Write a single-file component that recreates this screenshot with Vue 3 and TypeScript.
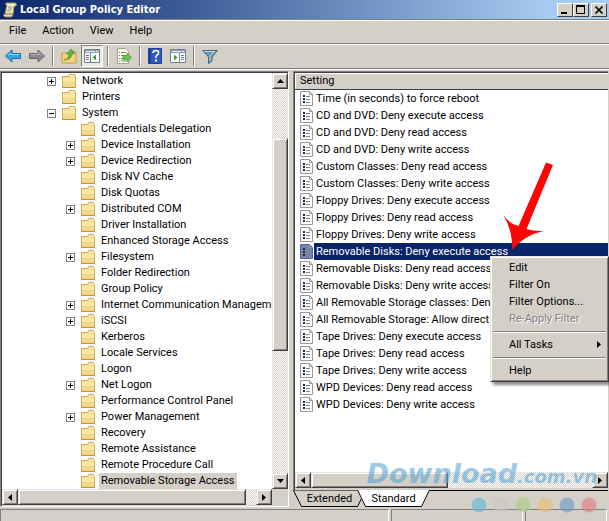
<script setup lang="ts">
import { ref } from 'vue'

interface TreeNode {
  name: string
  level: 1 | 2
  state?: 'open' | 'closed'
}

const nodes: TreeNode[] = [
  { name: 'Network', level: 1, state: 'closed' },
  { name: 'Printers', level: 1 },
  { name: 'System', level: 1, state: 'open' },
  { name: 'Credentials Delegation', level: 2 },
  { name: 'Device Installation', level: 2, state: 'closed' },
  { name: 'Device Redirection', level: 2, state: 'closed' },
  { name: 'Disk NV Cache', level: 2 },
  { name: 'Disk Quotas', level: 2 },
  { name: 'Distributed COM', level: 2, state: 'closed' },
  { name: 'Driver Installation', level: 2 },
  { name: 'Enhanced Storage Access', level: 2 },
  { name: 'Filesystem', level: 2, state: 'closed' },
  { name: 'Folder Redirection', level: 2 },
  { name: 'Group Policy', level: 2 },
  { name: 'Internet Communication Manageme', level: 2, state: 'closed' },
  { name: 'iSCSI', level: 2, state: 'closed' },
  { name: 'Kerberos', level: 2 },
  { name: 'Locale Services', level: 2 },
  { name: 'Logon', level: 2 },
  { name: 'Net Logon', level: 2, state: 'closed' },
  { name: 'Performance Control Panel', level: 2 },
  { name: 'Power Management', level: 2, state: 'closed' },
  { name: 'Recovery', level: 2 },
  { name: 'Remote Assistance', level: 2 },
  { name: 'Remote Procedure Call', level: 2 },
  { name: 'Removable Storage Access', level: 2 },
]

const settings: string[] = [
  'Time (in seconds) to force reboot',
  'CD and DVD: Deny execute access',
  'CD and DVD: Deny read access',
  'CD and DVD: Deny write access',
  'Custom Classes: Deny read access',
  'Custom Classes: Deny write access',
  'Floppy Drives: Deny execute access',
  'Floppy Drives: Deny read access',
  'Floppy Drives: Deny write access',
  'Removable Disks: Deny execute access',
  'Removable Disks: Deny read access',
  'Removable Disks: Deny write access',
  'All Removable Storage classes: Deny',
  'All Removable Storage: Allow direct',
  'Tape Drives: Deny execute access',
  'Tape Drives: Deny read access',
  'Tape Drives: Deny write access',
  'WPD Devices: Deny read access',
  'WPD Devices: Deny write access',
]

const menus = ['File', 'Action', 'View', 'Help']
const dots = ['#5fb7d8', '#c9c7c6', '#a9cc85', '#e8bd72', '#6699c4', '#e27a7a']

const currentNode = ref('Removable Storage Access')
const currentSetting = ref('Removable Disks: Deny execute access')
</script>

<template>
  <div class="window">
    <header class="titlebar">
      <svg class="app-icon" width="14" height="16" viewBox="0 0 14 16" aria-hidden="true">
        <path d="M3 1h9q2 0 1 3h-2l-1 8H2l2-9q-2 0-1-2z" fill="#f3edcf" stroke="#a59865" />
        <path d="M1 12h9q0 3-2 3H2q-2-1-1-3z" fill="#e3d8a8" stroke="#8f824f" />
        <path d="M5 5h4M5 7h4M4 9h4" stroke="#928a68" />
      </svg>
      <h1>Local Group Policy Editor</h1>
      <div class="caption-buttons">
        <button class="cap" aria-label="Minimize"><svg width="12" height="10" viewBox="0 0 12 10"><path d="M2 7h6v2H2z" /></svg></button>
        <button class="cap" aria-label="Maximize"><svg width="12" height="10" viewBox="0 0 12 10"><path d="M1 0h9v9H1zM2 2v6h7V2z" fill-rule="evenodd" /></svg></button>
        <button class="cap close" aria-label="Close"><svg width="12" height="10" viewBox="0 0 12 10"><path d="M2.500 1.500l7 7M9.500 1.500l-7 7" stroke="#000" stroke-width="1.700" /></svg></button>
      </div>
    </header>

    <nav class="menubar">
      <button v-for="m in menus" :key="m">{{ m }}</button>
    </nav>

    <div class="toolbar">
      <button class="tool" aria-label="Back">
        <svg width="16" height="14" viewBox="0 0 16 14"><path d="M.5 7L7 1v3.500h8.500v5H7V13z" fill="#35a4e5" stroke="#1a6da8" /><path d="M3 6.500L6 4v1.500h8.500" fill="none" stroke="#8fd4fa" /></svg>
      </button>
      <button class="tool forward" aria-label="Forward">
        <svg width="16" height="14" viewBox="0 0 16 14"><path d="M15.500 7L9 1v3.500H.5v5H9V13z" fill="#8b8b8b" stroke="#626262" /><path d="M1.500 5.500H10V3.500L13 6.500" fill="none" stroke="#b5b5b5" /></svg>
      </button>
      <span class="sep"></span>
      <button class="tool" aria-label="Up one level">
        <svg width="16" height="16" viewBox="0 0 16 16"><path d="M1 5h5l1 1h6V4h2v11H1z" fill="#f3d27a" stroke="#c19c46" /><path d="M3 12q5-1 5-6H5.500L10 1l4 4h-2.500q-1 7-8.500 7z" fill="#62b73e" stroke="#3d8a25" stroke-width=".6" /></svg>
      </button>
      <button class="tool pressed" aria-label="Show or hide console tree" aria-pressed="true">
        <svg width="16" height="14" viewBox="0 0 16 14"><path d="M.5.5h15v13H.5z" fill="#fff" stroke="#77818c" /><path d="M1 1h14v3H1z" fill="#8fa0b3" /><path d="M2 2.500h9M12 2.500h2" stroke="#e7edf3" /><path d="M6.500 4v9" stroke="#77818c" /><path d="M2 6.500h3M2 8.500h3M2 10.500h3" stroke="#5b7ba3" /><path d="M12 5.500v6L8.500 8.500z" fill="#36a32c" /></svg>
      </button>
      <span class="sep"></span>
      <button class="tool" aria-label="Export list">
        <svg width="16" height="16" viewBox="0 0 16 16"><path d="M1.500.5h8l3 3v12h-11z" fill="#fffef0" stroke="#a8a28c" /><path d="M3 4.500h1M5 4.500h5M3 7.500h1M5 7.500h4M3 10.500h1M5 10.500h3M3 13h1M5 13h5" stroke="#777" /><path d="M7 7.500h4V5l4.500 4.500L11 14v-2.500H7z" fill="#68c648" stroke="#3e962b" stroke-width=".7" /></svg>
      </button>
      <span class="sep"></span>
      <button class="tool" aria-label="Help">
        <svg width="14" height="16" viewBox="0 0 14 16"><path d="M.5.5h13v15H.5z" fill="#315bc4" stroke="#223e91" /><path d="M1 1h2v14H1z" fill="#1f3f9d" /><path d="M5 5q0-2.500 3-2.500T10.500 5Q10.500 6.500 8.500 7.500 8 8 8 10" fill="none" stroke="#fff" stroke-width="1.600" /><path d="M7 11.500h2v2H7z" fill="#fff" /></svg>
      </button>
      <button class="tool panel" aria-label="Show or hide action pane">
        <svg width="16" height="14" viewBox="0 0 16 14"><path d="M.5.5h15v13H.5z" fill="#fff" stroke="#77818c" /><path d="M1 1h14v3H1z" fill="#8fa0b3" /><path d="M2 2.500h9M12 2.500h2" stroke="#e7edf3" /><path d="M9.500 4v9" stroke="#77818c" /><path d="M11 6.500h3M11 8.500h3M11 10.500h3" stroke="#5b7ba3" /><path d="M4 5.500v6L7.500 8.500z" fill="#36a32c" /></svg>
      </button>
      <span class="sep"></span>
      <button class="tool" aria-label="Filter">
        <svg width="16" height="15" viewBox="0 0 16 15"><path d="M.5 1.500h15L10 8v4l-3.500 2.500V8z" fill="#6e93ad" stroke="#476b85" /><path d="M2.500 2.500h10L8 7v5" fill="none" stroke="#c8dfec" /></svg>
      </button>
    </div>

    <main class="body">
      <section class="tree-pane" aria-label="Console tree">
        <div class="tree-main">
          <ul class="tree">
            <li v-for="n in nodes" :key="n.name" :class="{ deep: n.level === 2 }">
              <span class="expander-slot">
                <button v-if="n.state" class="expander" :aria-label="n.state === 'open' ? 'Collapse' : 'Expand'">
                  <svg width="7" height="7" viewBox="0 0 7 7"><path :d="n.state === 'open' ? 'M1 3h5v1H1z' : 'M1 3h2V1h1v2h2v1H4v2H3V4H1z'" /></svg>
                </button>
              </span>
              <svg class="folder" width="14" height="14" viewBox="0 0 14 14" aria-hidden="true">
                <path d="M.5 2.500h6l1-2h5l1 2v11H.5z" fill="#f4d98b" stroke="#d3ae58" />
                <path d="M8 1.500h4v1H8z" fill="#fff8df" />
                <path d="M1 4h12v4H1z" fill="#fae6a5" />
                <path d="M.5 13.500h13" stroke="#b8923c" />
              </svg>
              <button class="node" :class="{ current: n.name === currentNode }" @click="currentNode = n.name">{{ n.name }}</button>
            </li>
          </ul>
          <div class="bar vertical">
            <button class="raised arrow" aria-label="Scroll up"><svg width="7" height="4" viewBox="0 0 7 4"><path d="M0 4L3.500 0 7 4z" /></svg></button>
            <span class="before"></span>
            <span class="raised thumb"></span>
            <span class="after"></span>
            <button class="raised arrow" aria-label="Scroll down"><svg width="7" height="4" viewBox="0 0 7 4"><path d="M0 0h7L3.500 4z" /></svg></button>
          </div>
        </div>
        <div class="bar-row">
          <div class="bar horizontal">
            <button class="raised arrow" aria-label="Scroll left"><svg width="4" height="7" viewBox="0 0 4 7"><path d="M4 0v7L0 3.500z" /></svg></button>
            <span class="raised thumb"></span>
            <span class="after"></span>
            <button class="raised arrow" aria-label="Scroll right"><svg width="4" height="7" viewBox="0 0 4 7"><path d="M0 0v7l4-3.500z" /></svg></button>
          </div>
          <span class="corner"></span>
        </div>
      </section>

      <section class="list-pane" aria-label="Settings">
        <div class="list-box">
          <div class="list-scroll">
            <table>
              <thead>
                <tr><th scope="col">Setting</th></tr>
              </thead>
              <tbody>
                <tr v-for="s in settings" :key="s" :class="{ chosen: s === currentSetting }" @click="currentSetting = s">
                  <td>
                    <div class="cell">
                      <svg class="page" width="13" height="15" viewBox="0 0 13 15" aria-hidden="true">
                        <path class="sheet" d="M.5.5h9l3 3v11H.5z" />
                        <path d="M9.500.5v3h3" fill="none" stroke="#999" />
                        <path d="M3 4h2v2H3zM3 7h2v2H3zM3 10h2v2H3z" fill="#26263a" />
                        <path d="M6 5.500h4M6 8.500h4M6 11.500h4" stroke="#858592" />
                      </svg>
                      <span class="label">{{ s }}</span>
                    </div>
                  </td>
                </tr>
              </tbody>
            </table>
          </div>
          <div class="bar horizontal">
            <button class="raised arrow" aria-label="Scroll left"><svg width="4" height="7" viewBox="0 0 4 7"><path d="M4 0v7L0 3.500z" /></svg></button>
            <span class="raised thumb half"></span>
            <span class="after"></span>
            <button class="raised arrow" aria-label="Scroll right"><svg width="4" height="7" viewBox="0 0 4 7"><path d="M0 0v7l4-3.500z" /></svg></button>
          </div>
        </div>
        <div class="tabs">
          <button class="tab">
            <svg width="73" height="17" viewBox="0 0 73 17" aria-hidden="true"><path d="M.5.5l8 16h56l8-16" fill="#d4d0c8" stroke="#000" /></svg>
            <span>Extended</span>
          </button>
          <button class="tab active">
            <svg width="73" height="17" viewBox="0 0 73 17" aria-hidden="true"><path d="M0 0h73l-8 16.500H8z" fill="#fff" /><path d="M.5 0l8 16.500h56l8-16.500" fill="none" stroke="#000" /></svg>
            <span>Standard</span>
          </button>
        </div>

        <div class="context-menu" role="menu">
          <button role="menuitem">Edit</button>
          <button role="menuitem">Filter On</button>
          <button role="menuitem">Filter Options...</button>
          <button role="menuitem" disabled>Re-Apply Filter</button>
          <hr />
          <button role="menuitem">All Tasks<svg width="4" height="7" viewBox="0 0 4 7"><path d="M0 0v7l4-3.500z" /></svg></button>
          <hr />
          <button role="menuitem">Help</button>
        </div>
        <svg class="pointer" width="51" height="90" viewBox="503 162 51 90" aria-hidden="true">
          <path d="M546 162.500l7 2.500-26.500 64q8 2.500 17 2-19 4-31.500 19 1-18-8.500-35 6 9 15 11z" fill="#fb0505" />
        </svg>
      </section>
    </main>

    <footer class="status">
      <span class="wide"></span>
      <span class="mid"></span>
      <span class="end"></span>
    </footer>

    <div class="watermark">
      <div class="brand">Download<small>.com.vn</small></div>
      <svg width="126" height="16" viewBox="0 0 126 16" aria-hidden="true">
        <circle v-for="(c, i) in dots" :key="c" :cx="8 + i * 22" cy="8" r="7.500" :fill="c" />
      </svg>
    </div>
  </div>
</template>

<style>
body {
  background: #d4d0c8;
}
</style>

<style scoped>
.window {
  position: relative;
  display: flex;
  flex-direction: column;
  min-height: 100vh;
  overflow: hidden;
  background: #d4d0c8;
  color: #000;
  font-family: Tahoma, Roboto, sans-serif;
  font-size: 11px;
  line-height: 16px;
}
button {
  margin: 0;
  padding: 0;
  border: 0;
  background: none;
  color: inherit;
  font: inherit;
  text-align: left;
  white-space: nowrap;
}
svg {
  display: block;
  flex: none;
}
.titlebar {
  display: flex;
  align-items: center;
  gap: 3px;
  height: 19px;
  padding: 0 2px 0 3px;
  background: linear-gradient(90deg, #0a246a, #a6caf0 90%);
}
h1 {
  flex: 1;
  margin: 0;
  color: #fff;
  font-family: Tahoma, "DejaVu Sans Condensed", sans-serif;
  font-size: 11px;
  line-height: 16px;
}
.caption-buttons {
  display: flex;
}
.cap {
  display: flex;
  align-items: center;
  justify-content: center;
  width: 16px;
  height: 14px;
  background: #d4d0c8;
  border: 1px solid;
  border-color: #fff #404040 #404040 #fff;
}
.cap.close {
  margin-left: 2px;
}
.menubar {
  display: flex;
  gap: 16px;
  align-items: center;
  height: 22px;
  padding-left: 9px;
  border-top: 1px solid #808080;
  box-shadow: inset 0 1px #fff;
}
.toolbar {
  display: flex;
  align-items: center;
  height: 24px;
  margin-top: 1px;
  padding-left: 5px;
  border-top: 1px solid #808080;
  border-bottom: 1px solid #808080;
  box-shadow: inset 0 1px #fff, 0 1px #fff;
}
.tool {
  display: flex;
  align-items: center;
  justify-content: center;
  height: 20px;
}
.forward,
.panel {
  margin-left: 8px;
}
.pressed {
  width: 22px;
  height: 22px;
  margin-left: 4px;
  background: #eceae5;
  border: 1px solid;
  border-color: #808080 #fff #fff #808080;
  box-sizing: border-box;
}
.pressed + .sep {
  margin-left: 4px;
}
.sep {
  width: 2px;
  height: 20px;
  margin: 0 7px;
  border-left: 1px solid #808080;
  background: #fff;
  box-sizing: border-box;
}
.body {
  flex: 1;
  display: grid;
  grid-template-columns: minmax(0, 289fr) minmax(0, 315fr);
  gap: 4px;
  padding: 2px 1px 0 0;
}
.tree-pane {
  display: flex;
  flex-direction: column;
  min-width: 0;
  border: 1px solid;
  border-color: #808080 #fff #fff #808080;
  box-shadow: inset 1px 1px #404040;
  padding: 1px 0 1px 1px;
}
.tree-main {
  flex: 1;
  display: flex;
  min-height: 0;
}
.tree {
  flex: 1;
  min-width: 0;
  margin: 0;
  padding: 0;
  overflow: hidden;
  list-style: none;
  background: #fff;
}
.tree li {
  display: flex;
  align-items: center;
  height: 16px;
  padding-left: 45px;
}
.tree li.deep {
  padding-left: 64px;
}
.expander-slot {
  width: 15px;
  flex: none;
}
.expander {
  display: block;
  border: 1px solid #808080;
}
.folder {
  margin-right: 4px;
}
.node {
  padding: 0 2px;
  line-height: 16px;
}
.node.current {
  background: #d4d0c8;
}
.bar {
  display: flex;
  background: repeating-conic-gradient(#fff 0 25%, #d4d0c8 0 50%) 0 0 / 2px 2px;
}
.vertical {
  flex-direction: column;
  width: 16px;
  flex: none;
}
.horizontal {
  flex: 1;
  height: 16px;
}
.raised {
  background: #d4d0c8;
  border: 1px solid;
  border-color: #e8e6e1 #404040 #404040 #e8e6e1;
  box-shadow: inset 1px 1px #fff, inset -1px -1px #808080;
  box-sizing: border-box;
}
.arrow {
  display: flex;
  align-items: center;
  justify-content: center;
  width: 16px;
  height: 16px;
  flex: none;
}
.before {
  flex: 49;
}
.vertical .thumb {
  flex: 212;
}
.vertical .after {
  flex: 123;
}
.horizontal .thumb {
  flex: 228;
}
.horizontal .after {
  flex: 10;
}
.horizontal .half {
  flex: 136;
}
.horizontal .half + .after {
  flex: 145;
}
.bar-row {
  display: flex;
}
.corner {
  width: 16px;
}
.list-pane {
  position: relative;
  display: flex;
  flex-direction: column;
  min-width: 0;
}
.list-box {
  flex: 1;
  display: flex;
  flex-direction: column;
  min-width: 0;
  border-left: 1px solid #808080;
  border-top: 1px solid #808080;
  border-bottom: 1px solid #000;
  box-shadow: inset 1px 1px #404040;
  padding: 1px 0 2px 1px;
}
.list-scroll {
  flex: 1;
  overflow: hidden;
  background: #fff;
}
.list-box .horizontal {
  flex: none;
}
table {
  width: 100%;
  border-collapse: collapse;
}
th {
  height: 16px;
  padding: 0 0 0 5px;
  background: #d4d0c8;
  border-bottom: 1px solid #404040;
  box-shadow: inset 1px 1px #fff;
  font-weight: 400;
  line-height: 16px;
  text-align: left;
}
td {
  padding: 0;
}
.cell {
  display: flex;
  align-items: center;
  gap: 1px;
  height: 17px;
  padding-left: 5px;
}
.label {
  flex: 1;
  padding-left: 2px;
  line-height: 17px;
  white-space: nowrap;
}
.sheet {
  fill: #fff;
  stroke: #999;
}
.chosen .label {
  background: #0a246a;
  color: #fff;
}
.chosen .sheet {
  fill: #7484ad;
  stroke: #526497;
}
.tabs {
  display: flex;
  height: 17px;
  margin-top: -1px;
}
.tab {
  position: relative;
  width: 73px;
  text-align: center;
  line-height: 17px;
}
.tab svg {
  position: absolute;
  inset: 0;
}
.tab span {
  position: relative;
}
.tab.active {
  margin-left: -9px;
}
.context-menu {
  position: absolute;
  top: 185px;
  left: 197px;
  right: -1px;
  display: flex;
  flex-direction: column;
  padding: 2px;
  background: #d4d0c8;
  border: 1px solid;
  border-color: #e8e6e1 #404040 #404040 #e8e6e1;
  box-shadow: inset 1px 1px #fff, inset -1px -1px #808080, 3px 3px 3px #0007;
}
.context-menu button {
  display: flex;
  align-items: center;
  justify-content: space-between;
  height: 17px;
  padding: 0 5px 0 16px;
}
.context-menu button:disabled {
  color: #808080;
  text-shadow: 1px 1px #fff;
}
hr {
  width: 100%;
  height: 1px;
  margin: 4px 0 3px;
  border: 0;
  border-top: 1px solid #808080;
  background: #fff;
}
.pointer {
  position: absolute;
  top: 91px;
  left: 210px;
}
.status {
  display: grid;
  grid-template-columns: 389fr 132fr 82fr;
  gap: 2px;
  height: 12px;
  margin-top: 2px;
  padding-right: 2px;
}
.status span {
  border: solid;
  border-width: 1px 1px 0;
  border-color: #808080 #fff #fff #808080;
}
.watermark {
  position: absolute;
  right: 12px;
  bottom: 8px;
  display: flex;
  flex-direction: column;
  align-items: flex-end;
  gap: 9px;
  opacity: 0.6;
  pointer-events: none;
}
.brand {
  color: #5ba6d4;
  font-family: "DejaVu Sans", sans-serif;
  font-size: 27px;
  font-style: italic;
  font-weight: 700;
  line-height: 22px;
}
.brand small {
  font-size: 18px;
}
</style>
